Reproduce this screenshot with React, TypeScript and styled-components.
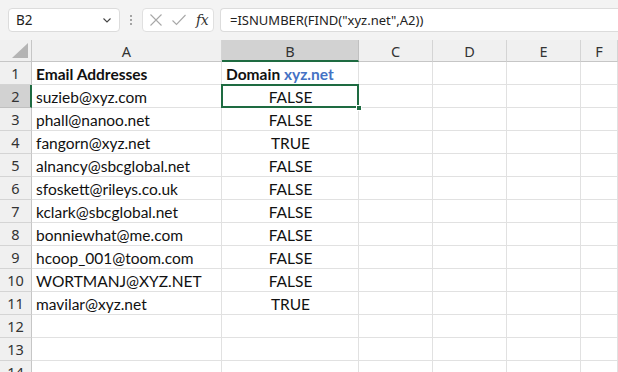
import React from "react";
import styled, { createGlobalStyle } from "styled-components";

const Global = createGlobalStyle`
  html, body { margin: 0; padding: 0; background: #ffffff; }
  body { width: 618px; height: 372px; overflow: hidden; }
`;

const Page = styled.div`
  width: 618px;
  height: 372px;
  overflow: hidden;
  display: flex;
  flex-direction: column;
  background: #ffffff;
`;

const Toolbar = styled.div`
  height: 40px;
  flex: none;
  background: #f3f3f3;
  display: flex;
  align-items: flex-start;
  padding: 8px 0 0 8px;
  box-sizing: border-box;
`;

const NameBox = styled.div`
  width: 112px;
  height: 24px;
  box-sizing: border-box;
  background: #fff;
  border: 1px solid #dcdcdc;
  border-radius: 4px;
  display: flex;
  align-items: center;
  justify-content: space-between;
  padding: 0 6px 0 7px;
  font-family: "Noto Sans", "Open Sans", sans-serif;
  font-size: 13.5px;
  color: #222;
`;

const Dots = styled.div`
  width: 22px;
  display: flex;
  flex-direction: column;
  align-items: center;
  gap: 2px;
  padding-top: 7px;
  & > span {
    width: 2px;
    height: 2px;
    background: #8a8a8a;
    border-radius: 1px;
  }
`;

const FxBox = styled.div`
  width: 72px;
  height: 24px;
  box-sizing: border-box;
  background: #fff;
  border: 1px solid #e0e0e0;
  border-radius: 4px;
  display: flex;
  align-items: center;
  padding: 0 4px 0 6px;
  gap: 8px;
`;

const Fx = styled.span`
  font-family: "DejaVu Serif", "Liberation Serif", serif;
  font-style: italic;
  font-size: 14px;
  color: #333;
  margin-left: 1px;
  letter-spacing: -0.5px;
`;

const FormulaBar = styled.div`
  flex: 1;
  margin-left: 6px;
  height: 24px;
  box-sizing: border-box;
  background: #fff;
  border: 1px solid #dcdcdc;
  border-right: none;
  border-radius: 4px 0 0 4px;
  display: flex;
  align-items: center;
  padding-left: 9px;
  font-family: "Noto Sans", "Open Sans", sans-serif;
  font-size: 13px;
  color: #222;
  white-space: nowrap;
`;

const Grid = styled.div`
  display: grid;
  grid-template-columns: 32px 190px 137px 74px 74px 74px 1fr;
  grid-auto-rows: 23px;
  grid-template-rows: 22px;
`;

const Corner = styled.div`
  background: #f0f0f0;
  border-right: 1px solid #c6c6c6;
  border-bottom: 1px solid #c6c6c6;
  box-sizing: border-box;
  display: flex;
  align-items: flex-end;
  justify-content: flex-end;
  padding: 0 3px 3px 0;
`;

const ColHead = styled.div<{ $sel?: boolean }>`
  box-sizing: border-box;
  background: ${(p) => (p.$sel ? "#d2d2d2" : "#f0f0f0")};
  border-right: 1px solid ${(p) => (p.$sel ? "#c0c0c0" : "#d4d4d4")};
  border-bottom: ${(p) => (p.$sel ? "2px solid #1e6b41" : "1px solid #c6c6c6")};
  display: flex;
  align-items: center;
  justify-content: center;
  padding-top: ${(p) => (p.$sel ? "1px" : "0")};
  font-family: "Noto Sans", "Open Sans", sans-serif;
  font-size: 14.5px;
  color: #333;
`;

const RowHead = styled.div<{ $sel?: boolean }>`
  box-sizing: border-box;
  background: ${(p) => (p.$sel ? "#d2d2d2" : "#f0f0f0")};
  border-right: ${(p) => (p.$sel ? "2px solid #1e6b41" : "1px solid #c6c6c6")};
  border-bottom: 1px solid ${(p) => (p.$sel ? "#c0c0c0" : "#d4d4d4")};
  display: flex;
  align-items: center;
  justify-content: center;
  padding-left: ${(p) => (p.$sel ? "1px" : "0")};
  font-family: "Noto Sans", "Open Sans", sans-serif;
  font-size: 14.5px;
  color: #333;
`;

const Cell = styled.div<{ $center?: boolean; $bold?: boolean; $sel?: boolean }>`
  position: relative;
  box-sizing: border-box;
  border-right: 1px solid #e1e1e1;
  border-bottom: 1px solid #e1e1e1;
  display: flex;
  align-items: center;
  justify-content: ${(p) => (p.$center ? "center" : "flex-start")};
  padding: 1px 3px 0 4px;
  font-family: Lato, "Noto Sans", sans-serif;
  font-size: 15.5px;
  font-weight: ${(p) => (p.$bold ? 700 : 400)};
  color: #111;
  white-space: nowrap;
  overflow: visible;
  ${(p) =>
    p.$sel &&
    `
    &::after {
      content: "";
      position: absolute;
      left: -1px; top: -1px; right: -1px; bottom: -1px;
      border: 2px solid #1e6b41;
      pointer-events: none;
    }
    &::before {
      content: "";
      position: absolute;
      right: -4px; bottom: -4px;
      width: 6px; height: 6px;
      background: #1e6b41;
      border: 1px solid #fff;
      box-sizing: border-box;
      z-index: 2;
    }
  `}
`;

const Blue = styled.span`
  color: #4472c4;
`;

const rows: [string, string][] = [
  ["suzieb@xyz.com", "FALSE"],
  ["phall@nanoo.net", "FALSE"],
  ["fangorn@xyz.net", "TRUE"],
  ["alnancy@sbcglobal.net", "FALSE"],
  ["sfoskett@rileys.co.uk", "FALSE"],
  ["kclark@sbcglobal.net", "FALSE"],
  ["bonniewhat@me.com", "FALSE"],
  ["hcoop_001@toom.com", "FALSE"],
  ["WORTMANJ@XYZ.NET", "FALSE"],
  ["mavilar@xyz.net", "TRUE"],
  ["", ""],
  ["", ""],
  ["", ""],
];

const cols = ["A", "B", "C", "D", "E", "F"];

export default function App() {
  return (
    <Page>
      <Global />
      <Toolbar>
        <NameBox>
          <span>B2</span>
          <svg width="12" height="12" viewBox="0 0 12 12">
            <path d="M2.5 4.5 L6 8 L9.5 4.5" fill="none" stroke="#444" strokeWidth="1.1" />
          </svg>
        </NameBox>
        <Dots>
          <span />
          <span />
          <span />
        </Dots>
        <FxBox>
          <svg width="14" height="14" viewBox="0 0 14 14">
            <path d="M1.5 1.5 L12.5 12.5 M12.5 1.5 L1.5 12.5" stroke="#a8a8a8" strokeWidth="1.1" fill="none" />
          </svg>
          <svg width="16" height="14" viewBox="0 0 16 14">
            <path d="M1.5 7.5 L5.5 11.5 L14.5 2" stroke="#a8a8a8" strokeWidth="1.1" fill="none" />
          </svg>
          <Fx>fx</Fx>
        </FxBox>
        <FormulaBar>=ISNUMBER(FIND("xyz.net",A2))</FormulaBar>
      </Toolbar>
      <Grid>
        <Corner>
          <svg width="16" height="15" viewBox="0 0 16 15">
            <path d="M16 0 L16 15 L0 15 Z" fill="#b4b4b4" />
          </svg>
        </Corner>
        {cols.map((c) => (
          <ColHead key={c} $sel={c === "B"}>
            {c}
          </ColHead>
        ))}
        <RowHead>1</RowHead>
        <Cell $bold>Email Addresses</Cell>
        <Cell $bold>
          Domain&nbsp;<Blue>xyz.net</Blue>
        </Cell>
        <Cell />
        <Cell />
        <Cell />
        <Cell />
        {rows.map(([a, b], i) => (
          <React.Fragment key={i}>
            <RowHead $sel={i === 0}>{i + 2}</RowHead>
            <Cell>{a}</Cell>
            <Cell $center $sel={i === 0}>
              {b}
            </Cell>
            <Cell />
            <Cell />
            <Cell />
            <Cell />
          </React.Fragment>
        ))}
      </Grid>
    </Page>
  );
}
